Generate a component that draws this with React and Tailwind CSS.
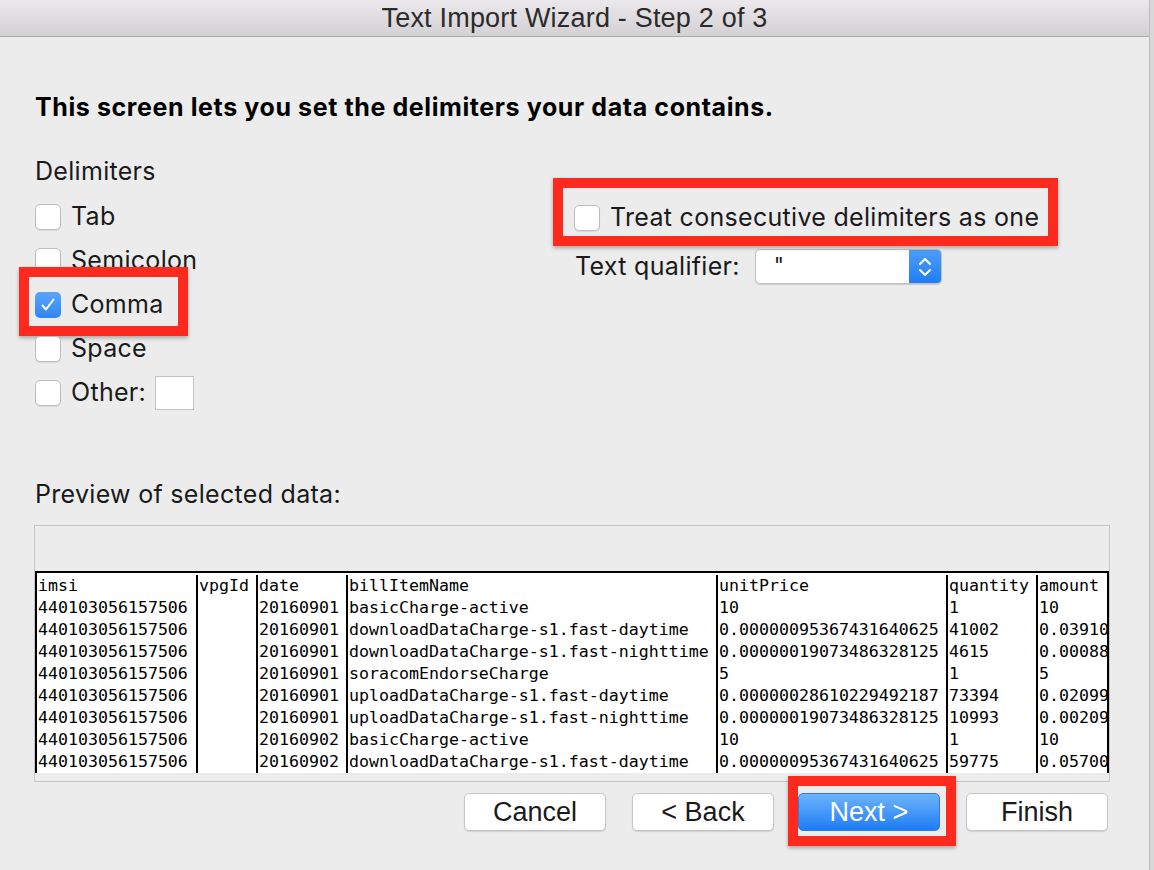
import React from 'react';

const font = { fontFamily: 'Inter, "Liberation Sans", Arial, sans-serif' };
const titleFont = { fontFamily: '"Liberation Sans", Arial, sans-serif' };

const rows = [
  ['imsi', 'vpgId', 'date', 'billItemName', 'unitPrice', 'quantity', 'amount'],
  ['440103056157506', '', '20160901', 'basicCharge-active', '10', '1', '10'],
  ['440103056157506', '', '20160901', 'downloadDataCharge-s1.fast-daytime', '0.00000095367431640625', '41002', '0.03910'],
  ['440103056157506', '', '20160901', 'downloadDataCharge-s1.fast-nighttime', '0.00000019073486328125', '4615', '0.00088'],
  ['440103056157506', '', '20160901', 'soracomEndorseCharge', '5', '1', '5'],
  ['440103056157506', '', '20160901', 'uploadDataCharge-s1.fast-daytime', '0.00000028610229492187', '73394', '0.02099'],
  ['440103056157506', '', '20160901', 'uploadDataCharge-s1.fast-nighttime', '0.00000019073486328125', '10993', '0.00209'],
  ['440103056157506', '', '20160902', 'basicCharge-active', '10', '1', '10'],
  ['440103056157506', '', '20160902', 'downloadDataCharge-s1.fast-daytime', '0.00000095367431640625', '59775', '0.05700'],
];

const colW = ['w-[161px]', 'w-[60px]', 'w-[90px]', 'w-[370px]', 'w-[230px]', 'w-[90px]', 'flex-1'];

function Box({ checked }) {
  if (checked)
    return (
      <span className="w-[26px] h-[26px] rounded-[5px] bg-gradient-to-b from-[#5aa4fb] to-[#2f86f6] flex items-center justify-center shrink-0">
        <svg width="18" height="18" viewBox="0 0 18 18" fill="none">
          <path d="M3.5 9.5l3.5 4 7.5-10" stroke="white" strokeWidth="2" strokeLinecap="round" strokeLinejoin="round" />
        </svg>
      </span>
    );
  return <span className="w-[26px] h-[26px] rounded-[5px] bg-white border border-[#bdbdbd] shadow-[0_1px_1px_rgba(0,0,0,0.08)] shrink-0" />;
}

function Check({ label, checked, children }) {
  return (
    <div className="relative flex items-center h-[26px]">
      <Box checked={checked} />
      <span className="ml-[10px] text-[25px] tracking-[0.3px] text-[#1a1a1a]">{label}</span>
      {children}
    </div>
  );
}

function Btn({ children, primary }) {
  return (
    <button
      style={titleFont}
      className={
        'w-[142px] h-[38px] rounded-[5px] text-[27px] flex items-center justify-center ' +
        (primary
          ? 'bg-gradient-to-b from-[#6cb3fb] to-[#1a7cf4] text-white border border-[#2a7de8]'
          : 'bg-white text-[#1a1a1a] border border-[#c6c6c6] shadow-[0_1px_1px_rgba(0,0,0,0.12)]')
      }
    >
      {children}
    </button>
  );
}

export default function App() {
  return (
    <div className="w-[1154px] h-[870px] bg-[#d8d8d8] flex" style={font}>
      <div className="w-[1150px] h-full bg-[#ececec] border-r border-[#bcbcbc] flex flex-col">
        <div className="h-[37px] bg-gradient-to-b from-[#eae8ea] to-[#d3d1d3] border-b border-[#a9a9a9] flex items-center justify-center">
          <span className="text-[27px] tracking-[0.2px] text-[#2b2b2b]" style={titleFont}>Text Import Wizard - Step 2 of 3</span>
        </div>

        <h1 className="mt-[56px] pl-[35px] text-[25px] tracking-[0.6px] font-bold leading-[28px] text-black">
          This screen lets you set the delimiters your data contains.
        </h1>

        <div className="flex">
          <div className="w-[574px] pl-[35px] pt-[36px]">
            <div className="text-[25px] tracking-[0.3px] leading-[28px] text-[#1a1a1a]">Delimiters</div>
            <div className="mt-[19px] flex flex-col gap-[18px]">
              <Check label="Tab" />
              <Check label="Semicolon" />
              <Check label="Comma" checked>
                <span className="absolute left-[-16px] top-[-25px] w-[169px] h-[69px] border-[10px] border-[#fd2a1d] shadow-[0_2px_4px_rgba(0,0,0,0.3)] pointer-events-none" />
              </Check>
              <Check label="Space" />
              <Check label="Other:">
                <span className="ml-[9px] w-[39px] h-[34px] bg-white border border-[#c4c4c4] shrink-0" />
              </Check>
            </div>
          </div>

          <div className="pt-[84px]">
            <Check label="Treat consecutive delimiters as one">
              <span className="absolute left-[-21px] top-[-27px] w-[505px] h-[68px] border-[10px] border-[#fd2a1d] shadow-[0_2px_4px_rgba(0,0,0,0.3)] pointer-events-none" />
            </Check>
            <div className="mt-[18px] flex items-center h-[35px]">
              <span className="text-[25px] tracking-[0.3px] text-[#1a1a1a] ml-[1px]">Text qualifier:</span>
              <div className="ml-[15px] w-[187px] h-[35px] flex rounded-[5px] bg-white border border-[#c2c2c2] shadow-[0_1px_1px_rgba(0,0,0,0.15)] overflow-hidden">
                <span className="flex-1 pl-[18px] text-[22px] leading-[30px] text-[#1a1a1a]">"</span>
                <span className="w-[32px] h-full bg-gradient-to-b from-[#4c9dfa] to-[#1f7ef4] flex items-center justify-center">
                  <svg width="16" height="24" viewBox="0 0 16 24" fill="none">
                    <path d="M3 9l5-5 5 5M3 15l5 5 5-5" stroke="white" strokeWidth="2" strokeLinecap="round" strokeLinejoin="round" />
                  </svg>
                </span>
              </div>
            </div>
          </div>
        </div>

        <div className="mt-[74px] pl-[35px] text-[25px] tracking-[0.3px] leading-[28px] text-[#1a1a1a]">Preview of selected data:</div>

        <div className="mt-[17px] ml-[34px] w-[1076px] h-[257px] border border-[#c6c6c6] bg-[#ececec] flex flex-col">
          <div className="h-[45px]" />
          <div className="h-[202px] bg-white border-t-2 border-l-2 border-r-2 border-black overflow-hidden pt-[2px] flex">
            {colW.map((w, ci) => (
              <div key={ci} className={w + ' shrink-0 overflow-hidden ' + (ci < 6 ? 'border-r-2 border-black' : '')}>
                {rows.map((r, ri) => (
                  <div
                    key={ri}
                    className="h-[22px] leading-[22px] text-[16.6px] text-black whitespace-nowrap pl-[1px]"
                    style={{ fontFamily: '"DejaVu Sans Mono", "Liberation Mono", monospace' }}
                  >
                    {r[ci]}
                  </div>
                ))}
              </div>
            ))}
          </div>
        </div>

        <div className="mt-[11px] pr-[41px] flex justify-end">
          <Btn>Cancel</Btn>
          <div className="ml-[26px]"><Btn>&lt; Back</Btn></div>
          <div className="relative ml-[24px]">
            <Btn primary>Next &gt;</Btn>
            <span className="absolute left-[-10px] top-[-17px] w-[168px] h-[70px] border-[10px] border-[#fd2a1d] shadow-[0_2px_4px_rgba(0,0,0,0.3)] pointer-events-none" />
          </div>
          <div className="ml-[26px]"><Btn>Finish</Btn></div>
        </div>
      </div>
    </div>
  );
}
